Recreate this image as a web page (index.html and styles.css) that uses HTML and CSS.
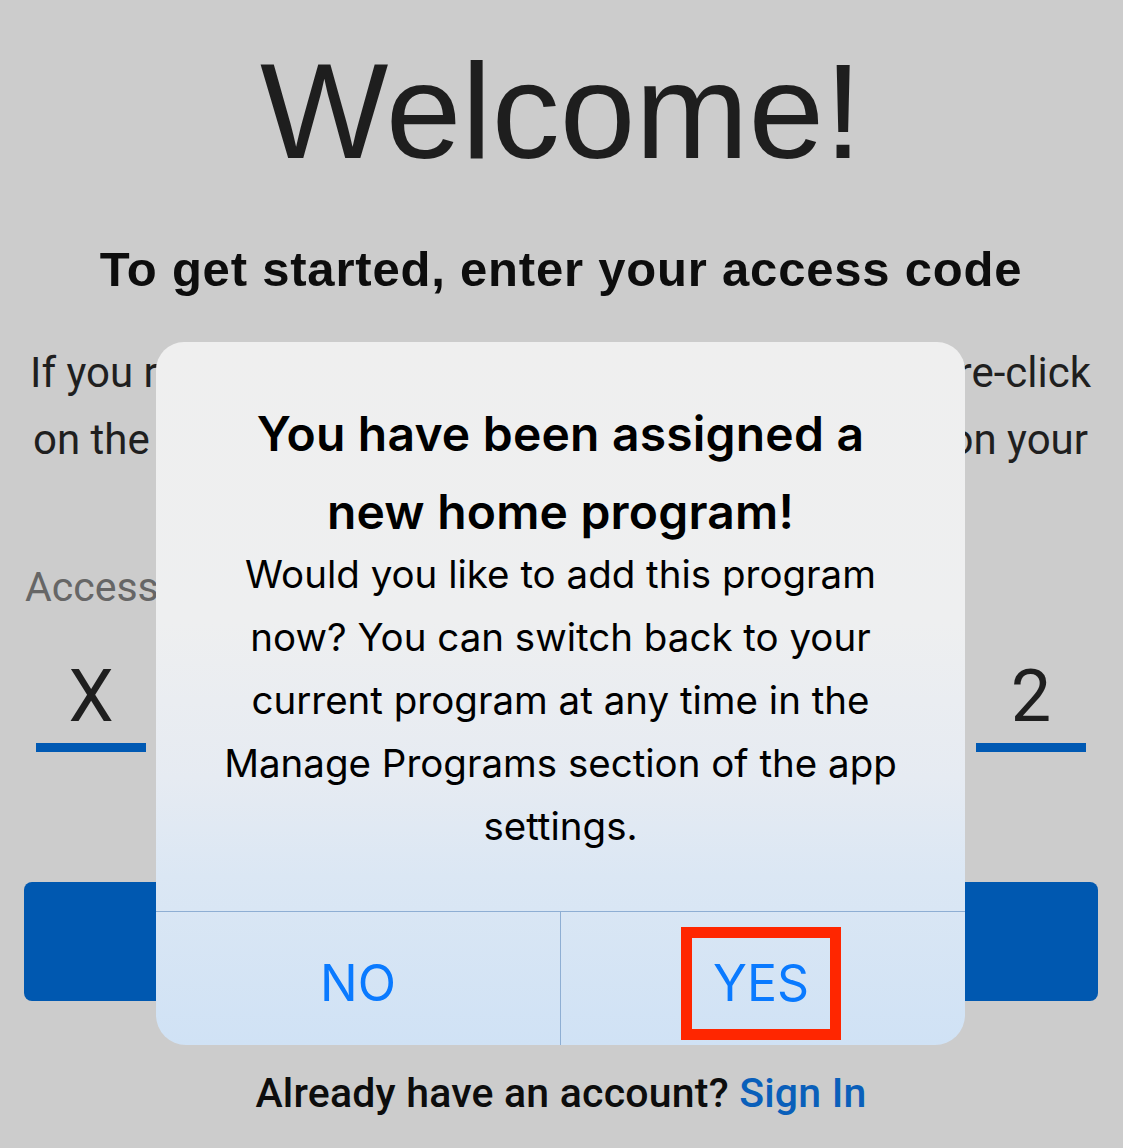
FILE: index.html
```html
<!DOCTYPE html>
<html lang="en">
<head>
    <meta charset="UTF-8">
    <meta name="viewport" content="width=device-width, initial-scale=1.0">
    <title>Welcome</title>
    <link rel="stylesheet" href="styles.css">
</head>
<body>
    <div class="page">
        <h1 class="welcome">Welcome!</h1>
        <h2 class="subtitle">To get started, enter your access code</h2>

        <div class="intro">
            <div class="intro-line"><span>If you received an email invite,</span><span>please re-click</span></div>
            <div class="intro-line second"><span>on the link in that email</span><span>to open the app on your</span></div>
            <div class="intro-line center"><span>device.</span></div>
        </div>

        <!-- Code d'accès -->
        <div class="code-label">Access code</div>
        <div class="code-row">
            <div class="code-box">X</div>
            <div class="code-box">4</div>
            <div class="code-box">7</div>
            <div class="code-box">P</div>
            <div class="code-box">9</div>
            <div class="code-box">2</div>
        </div>

        <button class="submit">CONTINUE</button>

        <div class="signin">Already have an account? <a href="#">Sign In</a></div>
    </div>

    <!-- Fenêtre d'alerte -->
    <div class="alert">
        <div class="alert-body">
            <div class="alert-title">You have been assigned a<br>new home program!</div>
            <div class="alert-text">Would you like to add this program<br>now? You can switch back to your<br>current program at any time in the<br>Manage Programs section of the app<br>settings.</div>
        </div>
        <div class="alert-actions">
            <div class="alert-btn"><span class="label">NO</span></div>
            <div class="alert-btn"><span class="label marked">YES</span></div>
        </div>
    </div>
</body>
</html>
```

FILE: styles.css
```css
/* Styles généraux */
html, body {
    margin: 0;
    padding: 0;
}

body {
    width: 1123px;
    height: 1148px;
    overflow: hidden;
    position: relative;
    background: #cccccc;
    color: #1f1f1f;
    font-family: "Roboto", "Liberation Sans", sans-serif;
}

.page {
    padding: 0 25px 0 24px;
    text-align: center;
}

.welcome {
    font-family: "Liberation Sans", sans-serif;
    font-weight: 400;
    font-size: 136px;
    line-height: 136px;
    color: #1e1e1e;
    margin: 43px 0 0;
}

.subtitle {
    font-family: "Liberation Sans", sans-serif;
    font-weight: 700;
    font-size: 49px;
    line-height: 60px;
    letter-spacing: 0.8px;
    color: #0d0d0d;
    margin: 60px 0 0;
}

/* Texte d'introduction */
.intro {
    margin-top: 40px;
    font-size: 42px;
    line-height: 67px;
    color: #1f1f1f;
}

.intro-line {
    display: flex;
    justify-content: space-between;
    padding: 0 7px 0 6px;
    white-space: nowrap;
}

.intro-line.second {
    padding: 0 10px 0 9px;
}

.intro-line.center {
    justify-content: center;
}

/* Code d'accès */
.code-label {
    text-align: left;
    font-size: 41px;
    line-height: 50px;
    color: #666666;
    margin-top: 22px;
    padding-left: 1px;
}

.code-row {
    display: flex;
    justify-content: space-between;
    margin: 45px 12px 0;
}

.code-box {
    width: 110px;
    font-size: 72px;
    line-height: 80px;
    padding-bottom: 6px;
    border-bottom: 9px solid #0059b3;
    color: #1f1f1f;
}

.submit {
    display: block;
    width: 100%;
    height: 119px;
    margin-top: 130px;
    border: none;
    border-radius: 8px;
    background: #0058b0;
    color: #ffffff;
    font-family: "Roboto", sans-serif;
    font-size: 40px;
    font-weight: 500;
}

.signin {
    font-weight: 500;
    font-size: 41px;
    line-height: 48px;
    letter-spacing: 0.2px;
    margin-top: 68px;
    color: #0d0d0d;
}

.signin a {
    color: #0a5fba;
    text-decoration: none;
}

/* Alerte */
.alert {
    position: absolute;
    left: 156px;
    top: 342px;
    width: 809px;
    height: 703px;
    border-radius: 28px 28px 30px 30px;
    overflow: hidden;
    background: linear-gradient(180deg, #efefef 0%, #eeeff0 40%, #e6ebf2 62%, #dbe7f4 76%, #d0e2f5 100%);
    display: flex;
    flex-direction: column;
    font-family: "Inter", "Roboto", sans-serif;
    text-align: center;
    color: #000000;
}

.alert-body {
    padding-top: 53px;
    height: 570px;
    box-sizing: border-box;
    border-bottom: 1px solid #8eaed3;
}

.alert-title {
    font-size: 48px;
    font-weight: 600;
    line-height: 78px;
    letter-spacing: 0.2px;
}

.alert-text {
    font-size: 38.5px;
    line-height: 63px;
    margin-top: -8px;
}

.alert-actions {
    flex: 1;
    display: flex;
}

.alert-btn {
    flex: 1;
    display: flex;
    align-items: center;
    justify-content: center;
    padding-top: 10px;
}

.alert-btn + .alert-btn {
    border-left: 1px solid #8eaed3;
}

.label {
    font-size: 50px;
    color: #0a7aff;
    line-height: 91px;
}

.marked {
    display: inline-block;
    width: 138px;
    border: 11px solid #ff2600;
    margin-right: 4px;
}
```
